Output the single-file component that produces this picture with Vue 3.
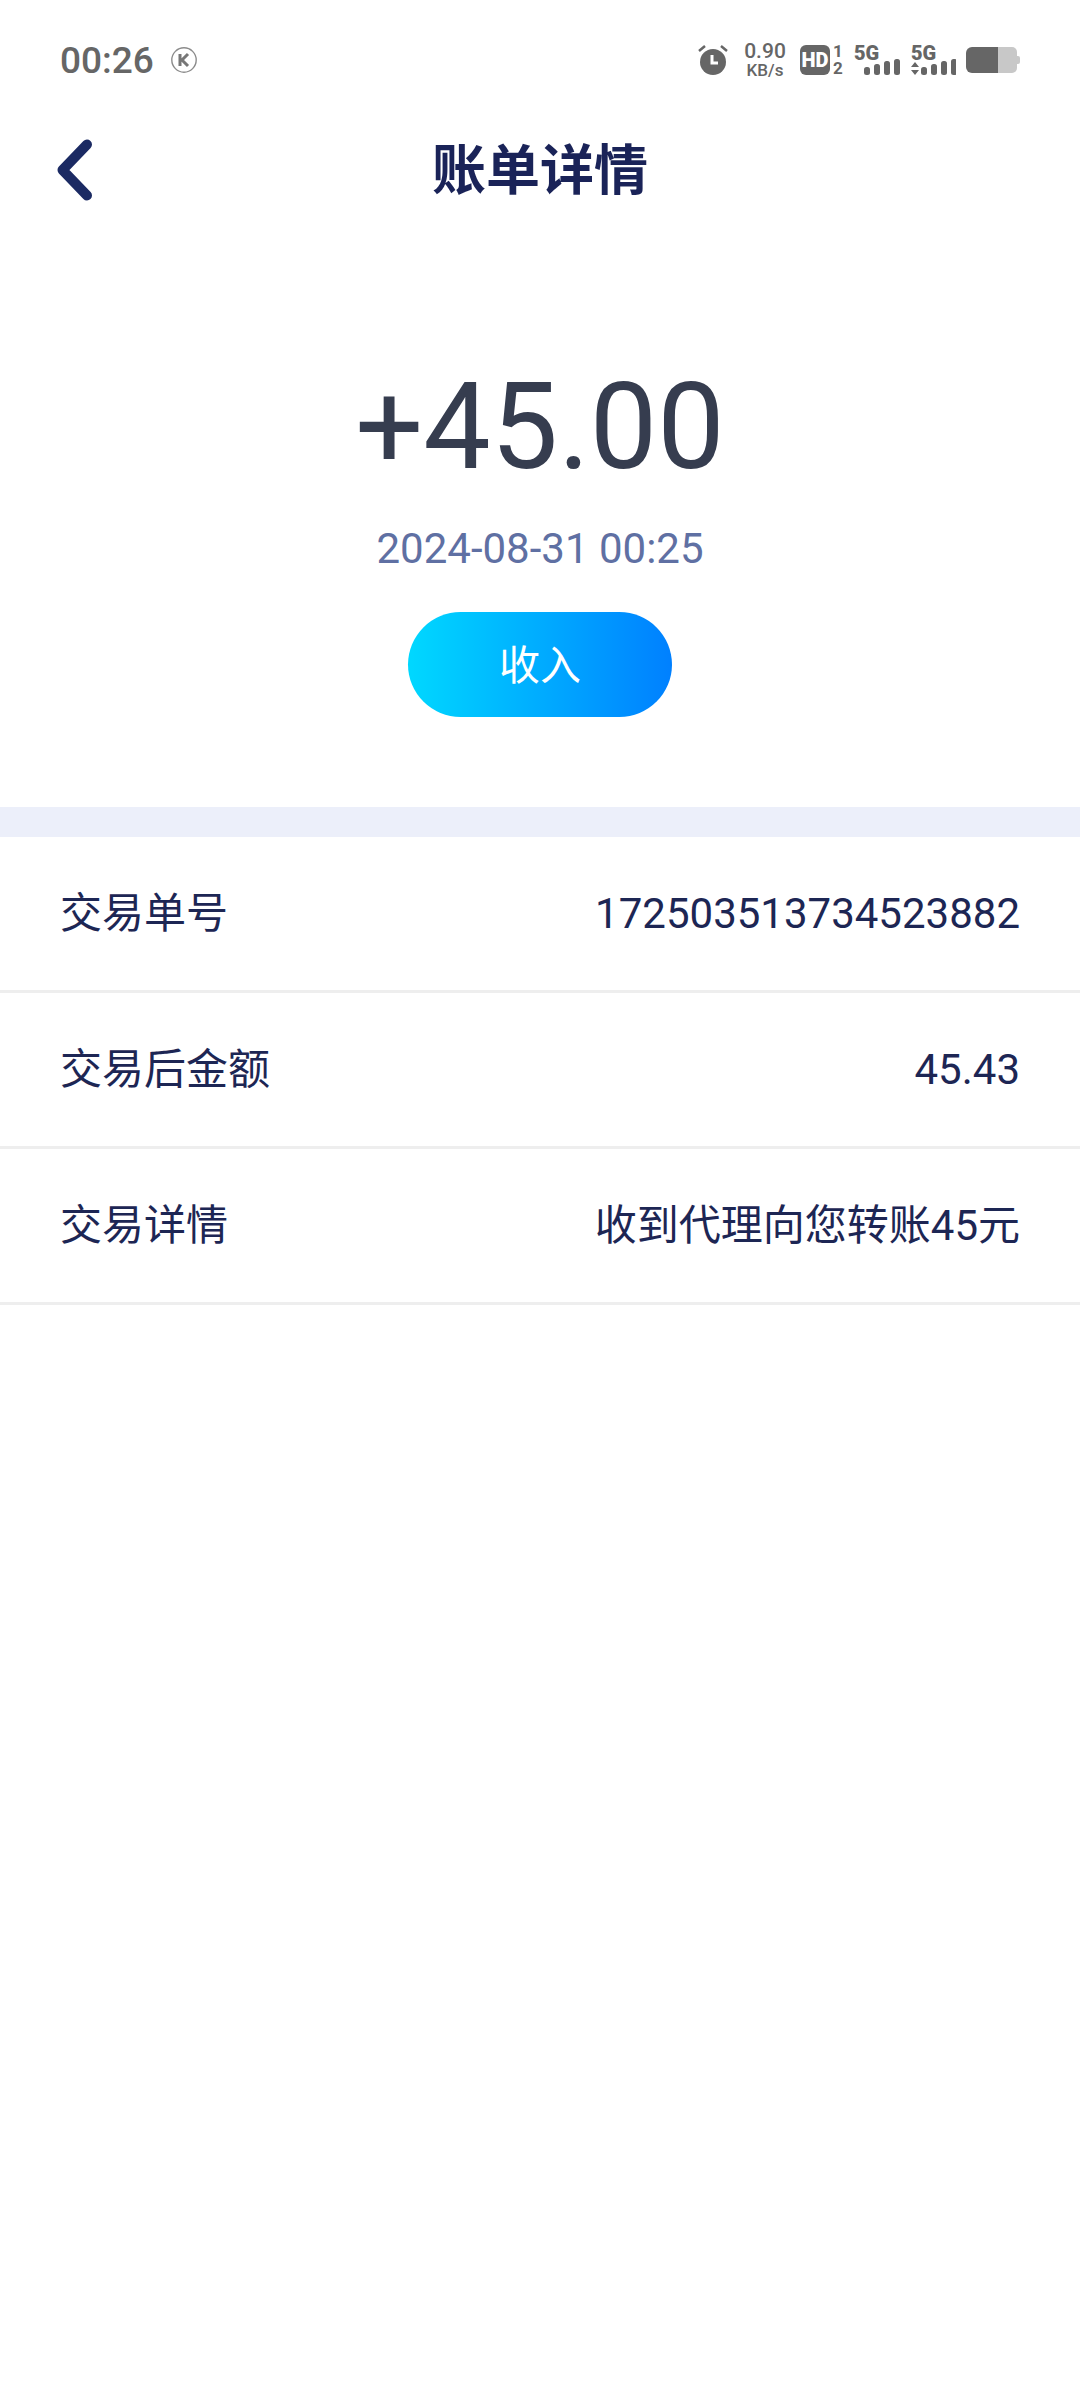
<script setup>
const rows = [
  { label: '交易单号', value: '172503513734523882' },
  { label: '交易后金额', value: '45.43' },
  { label: '交易详情', value: '收到代理向您转账45元' },
]
const bars = [
  { x: 0, h: 8 },
  { x: 10, h: 11 },
  { x: 20, h: 14 },
  { x: 30, h: 16 },
]
</script>

<template>
  <div class="page">
    <div class="status-bar">
      <div class="status-left">
        <span class="time">00:26</span>
        <svg class="k-icon" width="28" height="28" viewBox="0 0 28 28">
          <circle cx="14" cy="14" r="12.2" fill="none" stroke="#8c8c8c" stroke-width="1.4" />
          <path d="M10 8v12M18 8l-6 6 6 6" fill="none" stroke="#777" stroke-width="3" />
        </svg>
      </div>
      <div class="status-right">
        <svg width="30" height="30" viewBox="0 0 30 30">
          <circle cx="15" cy="17" r="13" fill="#666" />
          <path d="M1 6l6-5M29 6l-6-5" stroke="#666" stroke-width="2.500" fill="none" />
          <path d="M14 10v8h6" stroke="#fff" stroke-width="3" fill="none" />
        </svg>
        <div class="speed">
          <span class="speed-num">0.90</span>
          <span class="speed-unit">KB/s</span>
        </div>
        <svg width="44" height="36" viewBox="0 -3 44 36">
          <rect x="0" y="0" width="30" height="30" rx="6" fill="#666" />
          <text x="15" y="22" class="hd">HD</text>
          <text x="38" y="12" class="sim">1</text>
          <text x="38" y="29" class="sim">2</text>
        </svg>
        <svg width="46" height="36" viewBox="0 -3 46 36">
          <text x="0" y="15" class="five-g">5G</text>
          <g transform="translate(10 14)">
            <rect v-for="b in bars" :key="b.x" :x="b.x" :y="16 - b.h" width="6" :height="b.h" rx="2.500" fill="#666" />
          </g>
        </svg>
        <svg width="46" height="36" viewBox="0 -3 46 36">
          <text x="1" y="15" class="five-g">5G</text>
          <path d="M1 22l4-5 4 5zM1 25h8l-4 5z" fill="#666" />
          <g transform="translate(11 14)">
            <rect v-for="b in bars" :key="b.x" :x="b.x" :y="16 - b.h" width="6" :height="b.h" rx="2.500" fill="#666" />
          </g>
        </svg>
        <svg width="54" height="26" viewBox="0 0 54 26">
          <path d="M6 0h26v26H6a6 6 0 0 1-6-6V6a6 6 0 0 1 6-6z" fill="#666" />
          <path d="M32 0h14a5 5 0 0 1 5 5v16a5 5 0 0 1-5 5H32z" fill="#c8c8c8" />
          <path d="M51 9h1a2 2 0 0 1 2 2v4a2 2 0 0 1-2 2h-1z" fill="#c8c8c8" />
        </svg>
      </div>
    </div>

    <header class="nav">
      <svg class="back" width="36" height="62" viewBox="0 0 36 62">
        <path d="M30 5.500 5.500 31 30 56.500" fill="none" stroke="#1b2a63" stroke-width="10" stroke-linecap="round" stroke-linejoin="round" />
      </svg>
      <h1 class="title">账单详情</h1>
    </header>

    <section class="hero">
      <div class="amount">+45.00</div>
      <div class="date">2024-08-31 00:25</div>
      <div class="pill">收入</div>
    </section>

    <div class="band"></div>

    <div class="row" v-for="row in rows" :key="row.label">
      <span class="label">{{ row.label }}</span>
      <span class="value">{{ row.value }}</span>
    </div>
  </div>
</template>

<style scoped>
.page {
  width: 1080px;
  min-height: 2400px;
  background: #fff;
  font-family: Roboto, "Noto Sans CJK SC", sans-serif;
}

.status-bar {
  height: 120px;
  padding: 0 60px;
  box-sizing: border-box;
  display: flex;
  align-items: center;
  justify-content: space-between;
}

.status-left {
  display: flex;
  align-items: center;
  gap: 16px;
}

.time {
  font-size: 37px;
  font-weight: 500;
  color: #666;
}

.status-right {
  display: flex;
  align-items: center;
  gap: 10px;
}

.status-right svg {
  display: block;
}

.speed {
  width: 46px;
  margin: 0 2px 0 4px;
  display: flex;
  flex-direction: column;
  align-items: center;
  color: #666;
  font-weight: 500;
}

.speed-num {
  font-size: 21px;
  line-height: 20px;
}

.speed-unit {
  font-size: 17px;
  line-height: 18px;
}

.hd {
  font-family: Roboto, sans-serif;
  font-size: 20px;
  font-weight: 900;
  fill: #fff;
  text-anchor: middle;
}

.sim {
  font-family: Roboto, sans-serif;
  font-size: 17px;
  font-weight: 700;
  fill: #666;
  text-anchor: middle;
}

.five-g {
  font-family: Roboto, sans-serif;
  font-size: 20px;
  font-weight: 900;
  fill: #666;
}

.nav {
  height: 100px;
  position: relative;
  display: flex;
  align-items: center;
  justify-content: center;
}

.back {
  position: absolute;
  left: 57px;
  top: 19px;
}

.title {
  margin: 3px 0 0;
  font-size: 54px;
  line-height: 70px;
  font-weight: 700;
  color: #1a2358;
}

.hero {
  padding: 137px 0 90px;
  display: flex;
  flex-direction: column;
  align-items: center;
}

.amount {
  font-size: 120px;
  line-height: 140px;
  color: #363d4f;
}

.date {
  margin-top: 27px;
  font-size: 42px;
  line-height: 50px;
  color: #5f70a3;
}

.pill {
  margin-top: 38px;
  width: 264px;
  height: 105px;
  padding-top: 2px;
  box-sizing: border-box;
  border-radius: 53px;
  background: linear-gradient(90deg, #00d8ff, #0080ff);
  color: #fff;
  font-size: 41px;
  line-height: 50px;
  display: flex;
  align-items: center;
  justify-content: center;
}

.band {
  height: 30px;
  background: #eceffa;
}

.row {
  height: 156px;
  box-sizing: border-box;
  padding: 0 60px;
  border-bottom: 3px solid #eeeeee;
  display: flex;
  align-items: center;
  justify-content: space-between;
  color: #1d2654;
  font-size: 42px;
  line-height: 50px;
}
</style>
